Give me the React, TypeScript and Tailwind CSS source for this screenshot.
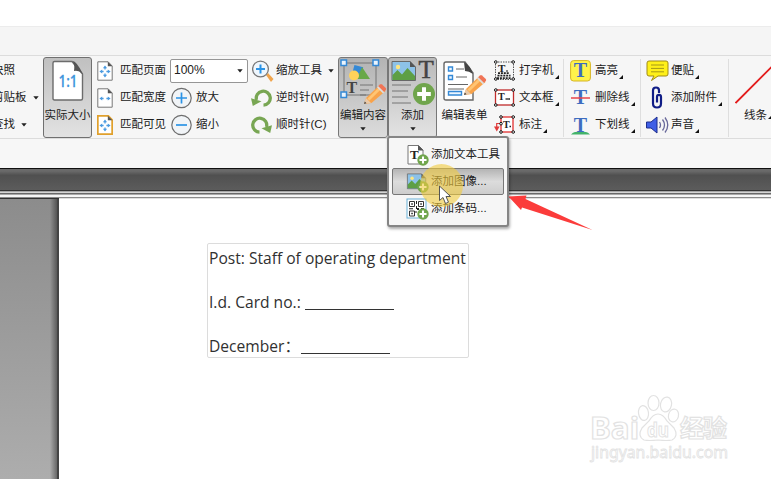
import React from 'react';

type Kids = { children?: React.ReactNode };

const Icon = ({ w = 22, h = 22, children }: Kids & { w?: number; h?: number }) => (
  <svg width={w} height={h} viewBox={`0 0 ${w} ${h}`} fill="none" className="shrink-0">
    {children}
  </svg>
);

const Down = () => (
  <svg width="6" height="4" viewBox="0 0 6 4" className="shrink-0">
    <path d="M.3.3h5.4L3 3.6z" fill="#222" />
  </svg>
);

const Corner = () => (
  <svg width="4" height="4" viewBox="0 0 4 4" className="mb-[5px] ml-px shrink-0 self-end">
    <path d="M4 0v4H0z" fill="#111" />
  </svg>
);

const Row = ({
  icon,
  label,
  slot = 'w-[25px]',
  corner,
  down,
}: {
  icon?: React.ReactNode;
  label: string;
  slot?: string;
  corner?: boolean;
  down?: boolean;
}) => (
  <div className="flex h-[27px] items-center">
    {icon && <div className={`flex shrink-0 ${slot}`}>{icon}</div>}
    <span>{label}</span>
    {corner && <Corner />}
    {down && (
      <span className="ml-[6px] flex">
        <Down />
      </span>
    )}
  </div>
);

const FitIcon = ({ kind }: { kind: 'page' | 'width' | 'visible' }) => (
  <Icon w={16} h={20}>
    <path
      d="M.8.8h10.400L15.200 5v14.200H.8z"
      fill="#fff"
      stroke={kind === 'visible' ? '#e0a02c' : '#777'}
      strokeWidth={kind === 'visible' ? 1.8 : 1}
    />
    <path d="M10.800.8v4.500h4.600z" fill="#555" />
    <path d="M2.400 10.500 5.200 8.400v4.200zM13.600 10.500l-2.800-2.100v4.200z" fill="#4a9ae0" />
    <path d="M5 10.500h1.600M9.400 10.500H11" stroke="#4a9ae0" strokeWidth="1.300" />
    {kind !== 'width' && (
      <>
        <path d="M8 4.500 5.900 7.200h4.200zM8 16.500l-2.100-2.700h4.200z" fill="#4a9ae0" />
        <path d="M8 7v1.400M8 12.600V14" stroke="#4a9ae0" strokeWidth="1.300" />
      </>
    )}
  </Icon>
);

const CircleIcon = ({ plus }: { plus?: boolean }) => (
  <Icon>
    <circle cx="10.500" cy="11" r="9.700" fill="#f1f4f7" stroke="#6e6e6e" strokeWidth="1.200" />
    <path d={plus ? 'M5 11h11M10.500 5.500v11' : 'M5 11h11'} stroke="#2b93e6" strokeWidth="1.700" />
  </Icon>
);

const Turn = ({ flip }: { flip?: boolean }) => (
  <Icon w={21} h={20}>
    <g transform={flip ? 'translate(21 0) scale(-1 1)' : undefined}>
      <path d="M12.500 17.200A7 7 0 1 0 5.500 12" stroke="#78a653" strokeWidth="3.300" />
      <path d="M0 10.300 10.500 13.200 1.800 18z" fill="#78a653" />
    </g>
  </Icon>
);

const Pencil = ({ at }: { at: string }) => (
  <g transform={at}>
    <path d="M0 20 2 14 15.500 1l6 6L7.500 19z" fill="#f8a34b" />
    <path d="M3.500 14.500 15 3.200l2 2L5.200 16.800z" fill="#ffc574" />
    <path d="m14 2.500 2-2q1-.8 2 0L21.800 4q.8 1 0 2l-2 2z" fill="#f07456" />
    <path d="m13 3.500 1.300-1.300 6 6L19 9.500z" fill="#ddd" />
    <path d="M0 20 2 14l5 5z" fill="#e9c9a8" />
    <path d="m0 20 .8-2.400 1.700 1.700z" fill="#444" />
  </g>
);

const Handle = ({ x, y }: { x: number; y: number }) => (
  <rect x={x} y={y} width="5.500" height="5.500" fill="#eaf4fd" stroke="#3489d6" strokeWidth="1.500" />
);

const Landscape = ({ at }: { at?: string }) => (
  <g transform={at}>
    <path d="M.5.5h18L24 6v13.500H.5z" fill="#8dc2e8" stroke="#686868" />
    <circle cx="6.500" cy="6" r="2.200" fill="#ffe680" />
    <path d="M1 18v-4l5-5 4.500 4.500L16 7l7.500 8v4H1z" fill="#5d9f45" />
    <path d="M18.500 0v6H24z" fill="#555" />
  </g>
);

const AddBadge = ({ cx, cy, r }: { cx: number; cy: number; r: number }) => (
  <g>
    <circle cx={cx} cy={cy} r={r} fill="#70a54c" />
    <path
      d={`M${cx - r * 0.62} ${cy}h${r * 1.24}M${cx} ${cy - r * 0.62}v${r * 1.24}`}
      stroke="#fff"
      strokeWidth={r * 0.36}
    />
  </g>
);

const SerifT = ({ x, y, size, fill = '#222', bold = true }: { x: number; y: number; size: number; fill?: string; bold?: boolean }) => (
  <text x={x} y={y} fontSize={size} fontWeight={bold ? 700 : 400} fill={fill} fontFamily="'Liberation Serif', serif">
    T
  </text>
);

const Dots = ({ pts }: { pts: [number, number][] }) => (
  <>
    {pts.map(([x, y]) => (
      <circle key={`${x}-${y}`} cx={x} cy={y} r="1.300" fill="#fff" stroke="#111" />
    ))}
  </>
);

const Typewriter = () => (
  <Icon w={21} h={21}>
    <rect x="1.500" y="2" width="18" height="17.500" stroke="#555" strokeDasharray="1.500 1" />
    <SerifT x={4} y={11.5} size={11} />
    <path d="M12 11h2" stroke="#111" />
    <path d="M4 13.200h11M3.500 15.700h13M3 18.200h14" stroke="#222" strokeWidth="1.700" strokeDasharray="2 .9" />
    <Dots pts={[[1.8, 2], [19.2, 2], [1.8, 19], [19.2, 19]]} />
  </Icon>
);

const TextBox = () => (
  <Icon w={21} h={19}>
    <rect x="1.500" y="2" width="18" height="15" fill="#fff" stroke="#c02c2c" strokeWidth="1.300" />
    <SerifT x={4} y={11.5} size={10} />
    <path d="M11.500 11h4.500" stroke="#222" strokeWidth="1.300" />
    <Dots pts={[[1.8, 2], [19.2, 2], [1.8, 17], [19.2, 17]]} />
  </Icon>
);

const Callout = () => (
  <Icon w={21} h={19}>
    <rect x="7" y="2" width="12" height="15" fill="#fff" stroke="#e23030" strokeWidth="1.300" />
    <SerifT x={9} y={12.5} size={10} />
    <path d="M6 8.500H2.700v4" stroke="#e03a3a" strokeWidth="1.200" />
    <path d="M0 11.500h5.600l-2.800 5z" fill="#e03a3a" />
    <path d="M15.500 11.500h1.500" stroke="#222" strokeWidth="1.300" />
    <Dots pts={[[7, 2], [19.2, 2], [7, 17], [19.2, 17], [7, 8.7]]} />
  </Icon>
);

const MarkT = ({ kind }: { kind: 'high' | 'strike' | 'under' }) => (
  <Icon w={21} h={22}>
    {kind === 'high' && <rect x=".6" y=".6" width="19.800" height="20.400" rx="3" fill="#fff34a" stroke="#d6b425" />}
    <SerifT x={3.8} y={kind === 'under' ? 17.5 : 17} size={20} fill="#3d6cc0" />
    {kind === 'strike' && <path d="M1 11h19" stroke="#e8444a" strokeWidth="1.500" />}
    {kind === 'under' && <path d="M1 20.500q2-2.500 4-2.500h11q2 0 4 2.500z" fill="#42b36a" />}
  </Icon>
);

const Note = () => (
  <Icon w={23} h={22}>
    <path d="M3 1h17q2 0 2 2v11q0 2-2 2h-8l-6.500 4.500L8 16H3q-2 0-2-2V3q0-2 2-2z" fill="#fff019" stroke="#a08b16" />
    <path d="M5 5h13M5 8.400h13M5 11.800h13" stroke="#a59819" />
  </Icon>
);

const Clip = () => (
  <Icon w={23} h={23}>
    <path
      d="M7 7v10.500q0 4 4 4t4-4V11q0-2.200-2-2.200T11 11v5.500M7 9V4.500q0-3 3-3t3 3V7"
      stroke="#101d86"
      strokeWidth="2.200"
    />
  </Icon>
);

const Speaker = () => (
  <Icon w={24} h={18}>
    <path d="M.5 6h4.500L11 1v16l-6-5H.5z" fill="#3f5fe6" stroke="#1d2d8c" />
    <path d="M13.500 6q2 3 0 6M16.500 3.500q4 5.500 0 11M19 1.500q5.500 7.500 0 15" stroke="#68689a" strokeWidth="1.300" />
  </Icon>
);

const BigButton = ({ children, frame, label, down }: Kids & { frame: string; label: string; down?: boolean }) => (
  <div className={`flex h-[81px] shrink-0 flex-col items-center overflow-hidden whitespace-nowrap ${frame}`}>
    <div className="flex h-[49px] items-start">{children}</div>
    <span className="leading-[17px]">{label}</span>
    {down && (
      <span className="mt-[3px]">
        <Down />
      </span>
    )}
  </div>
);

const MenuItem = ({ label, icon, selected }: { label: string; icon: React.ReactNode; selected?: boolean }) => (
  <div
    className={`flex h-[27px] items-center rounded-[2px] border pl-[13px] ${
      selected ? 'border-[#777] bg-linear-to-b from-[#b4b4b4] via-[#dcdcdc] to-[#cdcdcd]' : 'border-transparent'
    }`}
  >
    <span className="flex w-[25px]">{icon}</span>
    <span>{label}</span>
  </div>
);

const Separator = () => <div className="mt-[2px] h-[78px] w-px shrink-0 bg-[#dedede]" />;

const Ribbon = () => (
  <div className="flex h-[84px] w-[790px] border-y border-[#dcdcdc] bg-[#f6f6f6] pt-px">
    <div className="-ml-[8px] w-[51px] shrink-0">
      <Row label="快照" />
      <Row label="剪贴板" down />
      <Row label="查找" down />
    </div>
    <BigButton
      label="实际大小"
      frame="w-[49px] rounded-[3px] border border-[#707070] bg-linear-to-b from-[#c0c0c0] to-[#e2e2e2]"
    >
      <Icon w={32} h={46}>
        <path d="M2.500 3.500H20L30.500 16v24.500q0 1.500-1.500 1.500H2.500Q1 42 1 40.500V5q0-1.500 1.500-1.500z" fill="#fff" stroke="#6c6c6c" strokeWidth="1.400" />
        <path d="M20.500 3q4 0 10.500 13-4-4-9-3 1-6-1.500-10z" fill="#555" />
        <text
          x="6.500"
          y="29"
          fontSize="17"
          fontWeight="500"
          fill="#3c94dc"
          stroke="#3c94dc"
          strokeWidth=".3"
          fontFamily="'Noto Sans', sans-serif"
          textLength="19"
          lengthAdjust="spacingAndGlyphs"
        >
          1:1
        </text>
      </Icon>
    </BigButton>
    <div className="ml-[5px] w-[73px] shrink-0">
      <Row icon={<FitIcon kind="page" />} label="匹配页面" slot="w-[23px]" />
      <Row icon={<FitIcon kind="width" />} label="匹配宽度" slot="w-[23px]" />
      <Row icon={<FitIcon kind="visible" />} label="匹配可见" slot="w-[23px]" />
    </div>
    <div className="w-[82px] shrink-0">
      <div className="flex h-[27px] items-center">
        <div className="flex h-[24px] w-[78px] items-center justify-between rounded-[2px] border border-[#969696] bg-white pr-[4px] pl-[3px] text-[12px]">
          <span>100%</span>
          <Down />
        </div>
      </div>
      <Row icon={<CircleIcon plus />} label="放大" slot="ml-px w-[25px]" />
      <Row icon={<CircleIcon />} label="缩小" slot="ml-px w-[25px]" />
    </div>
    <div className="w-[86px] shrink-0">
      <Row
        icon={
          <Icon>
            <path d="m14 15 2-2 5.500 6-2.500 3z" fill="#f0a44c" />
            <circle cx="8.500" cy="9" r="7.900" fill="#eef6fd" stroke="#777" strokeWidth="1.300" />
            <path d="M4 9h9M8.500 4.500v9" stroke="#2b93e6" strokeWidth="2" />
          </Icon>
        }
        label="缩放工具"
        slot="w-[24px]"
        down
      />
      <Row icon={<Turn />} label="逆时针(W)" slot="-ml-px w-[25px]" />
      <Row icon={<Turn flip />} label="顺时针(C)" slot="-ml-px w-[25px]" />
    </div>
    <BigButton
      label="编辑内容"
      down
      frame="w-[50px] rounded-[3px] border border-[#777] bg-linear-to-b from-[#b3b3b3] to-[#dcdcdc]"
    >
      <Icon w={48} h={48}>
        <path d="M5 5h32v32H5z" stroke="#747474" />
        <path d="M14 8h9v10h-9z" fill="#3489d6" transform="rotate(15 19 13)" />
        <path d="m23 9 8 12H18z" fill="#68a849" />
        <circle cx="15" cy="17.500" r="5" fill="#ffd25a" />
        <SerifT x={7.5} y={35} size={16} fill="#444" />
        <path d="M21 27h13M21 32h9M21 37h6" stroke="#747474" />
        <Handle x={2} y={2} />
        <Handle x={34} y={2} />
        <Handle x={2} y={34} />
        <Pencil at="translate(25 26)" />
      </Icon>
    </BigButton>
    <BigButton
      label="添加"
      down
      frame="w-[49px] rounded-[3px] border border-[#777] bg-linear-to-b from-[#bababa] to-[#e3e3e3]"
    >
      <Icon w={47} h={48}>
        <Landscape at="translate(2.500 3)" />
        <g stroke="#444" strokeWidth=".5">
          <SerifT x={29.5} y={19.5} size={25} fill="#444" bold={false} />
        </g>
        <path d="M3 27h19M3 33h16M3 39h16M3 45h19" stroke="#747474" />
        <AddBadge cx={35} cy={36} r={11} />
      </Icon>
    </BigButton>
    <BigButton label="编辑表单" frame="w-[55px] pt-px">
      <Icon w={48} h={48}>
        <path d="M5 4h19l8 11v27H5q-2 0-2-2V6q0-2 2-2z" fill="#fff" stroke="#666" strokeWidth="1.400" />
        <path d="M23 4q6 3 9 12-4-3-8-3z" fill="#444" />
        <path d="M15 11h8M15 19h11M7 26.500h20M7 31h16" stroke="#666" />
        <path d="M7.500 9h4v4h-4zM7.500 17.500h4v4h-4zM7.500 33.500h13v3.500h-13z" fill="#eaf5ff" stroke="#3489d6" strokeWidth="1.400" />
        <Pencil at="translate(23 17)" />
      </Icon>
    </BigButton>
    <div className="ml-[2px] w-[69px] shrink-0">
      <Row icon={<Typewriter />} label="打字机" corner />
      <Row icon={<TextBox />} label="文本框" corner />
      <Row icon={<Callout />} label="标注" corner />
    </div>
    <Separator />
    <div className="ml-[6px] w-[70px] shrink-0">
      <Row icon={<MarkT kind="high" />} label="高亮" corner />
      <Row icon={<MarkT kind="strike" />} label="删除线" corner />
      <Row icon={<MarkT kind="under" />} label="下划线" corner />
    </div>
    <Separator />
    <div className="ml-[5px] w-[82px] shrink-0">
      <Row icon={<Note />} label="便贴" corner />
      <Row icon={<Clip />} label="添加附件" corner />
      <Row icon={<Speaker />} label="声音" corner />
    </div>
    <Separator />
    <div className="ml-[6px] flex w-[50px] shrink-0 flex-col">
      <Icon w={46} h={50}>
        <path d="M.5 46 45 1.500" stroke="#e31b1b" strokeWidth="1.900" />
      </Icon>
      <div className="ml-[9px] flex h-[17px] items-center">
        <span>线条</span>
        <Corner />
      </div>
    </div>
  </div>
);

const AddMenu = () => (
  <div className="absolute top-[136px] left-[387px] h-[91px] w-[122px] rounded-[3px] border-2 border-[#858585] bg-[#f6f6f6] px-[3px] pt-[3px] shadow-[1px_2px_3px_#0005]">
    <MenuItem
      label="添加文本工具"
      icon={
        <Icon w={23} h={22}>
          <path d="M2 1.500h10.500L17 6v14H2z" fill="#fff" stroke="#777" />
          <path d="M12 1v5.500h5.500z" fill="#555" />
          <SerifT x={4} y={15} size={13} />
          <AddBadge cx={17} cy={16} r={5.7} />
        </Icon>
      }
    />
    <MenuItem
      selected
      label="添加图像..."
      icon={
        <Icon w={23} h={22}>
          <Landscape at="translate(1 2.500) scale(.78)" />
          <AddBadge cx={17} cy={16} r={5.7} />
        </Icon>
      }
    />
    <MenuItem
      label="添加条码..."
      icon={
        <Icon w={23} h={22}>
          <rect x="1" y="1" width="19" height="19" fill="#fff" stroke="#69afd6" />
          <path d="M3.500 3.500h5v5h-5zM12.500 3.500h5v5h-5zM3.500 13h5v5h-5z" stroke="#333" />
          <path d="M5.300 5.300h1.500v1.500H5.300zM14.300 5.300h1.500v1.500h-1.500zM5.300 14.800h1.500v1.500H5.300zM10 3h1v3h-1zM10 8h1v3h-1zM11 10h2v2h-2zM15 10h3v1h-3zM3 10.200h4v1H3zM9.500 13h1v2h-1z" fill="#222" />
          <AddBadge cx={17} cy={16} r={5.7} />
        </Icon>
      }
    />
  </div>
);

const Watermark = () => (
  <svg className="absolute top-[390px] left-[585px]" width="150" height="76" viewBox="0 0 150 76" fill="#fff" stroke="#e2e2e2">
    <g fontWeight="700" strokeWidth="1.200">
      <text x="5" y="49" fontSize="31" fontFamily="'Noto Sans', sans-serif" textLength="49" lengthAdjust="spacingAndGlyphs">
        Bai
      </text>
      <ellipse cx="58.500" cy="23" rx="5" ry="7.500" transform="rotate(-8 58.500 23)" />
      <ellipse cx="68.500" cy="13" rx="5.500" ry="7.500" />
      <ellipse cx="81" cy="14.500" rx="5.500" ry="7.500" transform="rotate(12 81 14.500)" />
      <ellipse cx="88.500" cy="25.500" rx="5" ry="6.500" transform="rotate(15 88.500 25.500)" />
      <path d="M73 24q5 0 9 7l7 7q5 8-2 12-5 1-14 0-9 1-14 0-7-4-2-12l7-7q4-7 9-7z" />
      <text x="62" y="47" fontSize="19" strokeWidth="1" fontFamily="'Noto Sans', sans-serif" textLength="22" lengthAdjust="spacingAndGlyphs">
        du
      </text>
      <text x="95" y="47" fontSize="24" fontFamily="'Noto Sans CJK SC', sans-serif" textLength="47">
        经验
      </text>
    </g>
    <text x="6" y="68" fontSize="16" strokeWidth=".8" fontFamily="'Noto Sans', sans-serif" textLength="137" lengthAdjust="spacingAndGlyphs">
      jingyan.baidu.com
    </text>
  </svg>
);

export default function App() {
  return (
    <div className="relative flex h-[479px] w-[771px] flex-col overflow-hidden bg-white font-['Liberation_Sans','Noto_Sans_CJK_SC',sans-serif] text-[11.5px] leading-[17px] whitespace-nowrap text-[#202020]">
      <div className="h-[26px] shrink-0" />
      <div className="h-[29px] shrink-0 border-t border-[#ececec] bg-[#f5f5f5]" />
      <Ribbon />
      <div className="h-[29px] shrink-0 bg-[#f7f7f7]" />
      <div className="h-[23px] shrink-0 border-t border-b border-t-[#111] border-b-[#333] bg-linear-to-b from-[#6a6a6a] from-10% via-[#505050] via-30% to-[#5c5c5c]" />
      <div className="h-px shrink-0 bg-[#a8a8a8]" />
      <div className="h-px shrink-0 bg-[#d4d4d4]" />
      <div className="h-px shrink-0 bg-[#686868]" />
      <div className="h-px shrink-0 bg-[#a8a8a8]" />
      <div className="h-[2px] shrink-0 bg-[#f5f5f5]" />
      <div className="h-px shrink-0 bg-[#8a8a8a]" />
      <div className="flex flex-1">
        <div className="flex w-[59px] shrink-0 border-t border-[#333] bg-linear-to-b from-[#8c8c8c] to-[#adadad]">
          <div className="ml-auto w-[9px] border-r-2 border-[#444] bg-linear-to-r from-transparent to-[#0006]" />
        </div>
        <div className="flex-1 border-t border-[#dedede] bg-white pt-[44px] pl-[148px]">
          <div className="h-[115px] w-[262px] rounded-[2px] border border-[#dcdcdc] pl-px font-['Open_Sans','Noto_Sans_CJK_SC',sans-serif] text-[15.6px] text-[#303030]">
            <p className="h-[44px] leading-[28px]">Post: Staff of operating department</p>
            <div className="flex h-[44px] leading-[28px]">
              <span className="w-[96px]">I.d. Card no.:</span>
              <span className="h-[22px] w-[89px] border-b border-[#333]" />
            </div>
            <div className="flex leading-[28px]">
              <span className="w-[92px]">December：</span>
              <span className="h-[22px] w-[89px] border-b border-[#333]" />
            </div>
          </div>
        </div>
      </div>
      <AddMenu />
      <div className="absolute top-[164px] left-[420px] h-[43px] w-[43px] rounded-full bg-[#f2cc3e]/60" />
      <svg className="absolute top-[185px] left-[438px]" width="16" height="20" viewBox="0 0 16 20">
        <path d="M1.500 1v14.500l3.500-3 2.500 6 3-1.300-2.500-5.700h4.500z" fill="#fff" stroke="#555" />
      </svg>
      <svg className="absolute top-[190px] left-[505px]" width="92" height="44" viewBox="0 0 92 44">
        <path d="m3.500 6.500 18-1-1 3.500 67 31L17 17.500l-1 2.500z" fill="#fb3c3b" />
      </svg>
      <Watermark />
    </div>
  );
}
